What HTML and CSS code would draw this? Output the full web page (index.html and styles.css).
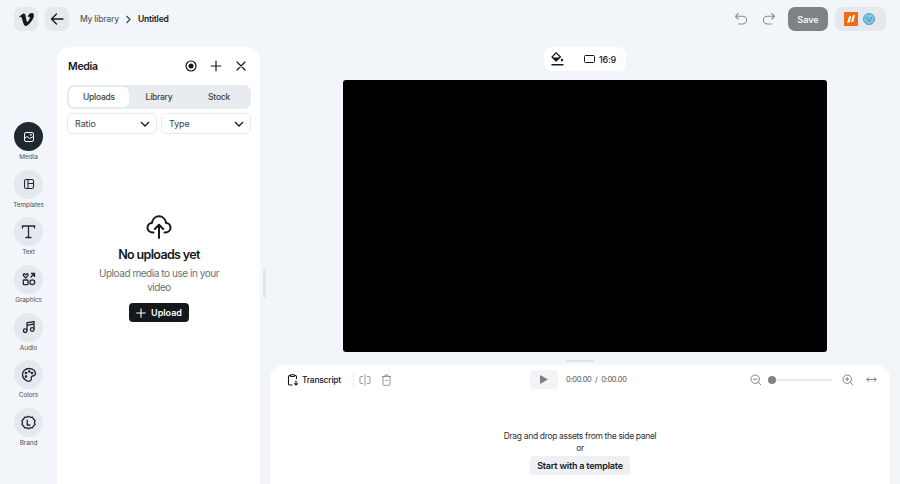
FILE: index.html
```html
<!DOCTYPE html>
<html lang="en">
<head>
<meta charset="utf-8">
<title>Untitled</title>
<link rel="stylesheet" href="styles.css">
</head>
<body>
<div class="app">
  <header class="topbar">
    <div class="top-left">
      <button class="square-btn"><svg width="15" height="13" viewBox="0 0 24 21"><path d="M23.900 4.900c-.1 2.300-1.700 5.500-4.900 9.600C15.700 18.800 12.900 21 10.600 21c-1.400 0-2.600-1.300-3.600-3.900L5 9.900C4.300 7.300 3.500 6 2.600 6c-.2 0-.8.400-1.900 1.100L0 6.200c1.200-1 2.400-2.100 3.500-3.100C5.100 1.700 6.300 1 7.100.9 9 .7 10.200 2 10.600 4.800c.5 3 .8 4.900 1 5.600.5 2.500 1.100 3.700 1.800 3.700.5 0 1.300-.8 2.300-2.400 1-1.600 1.600-2.800 1.700-3.700.1-1.400-.4-2.100-1.700-2.100-.6 0-1.200.1-1.800.4C15.100 2.200 17.400.2 20.800 0c2.200-.1 3.300 1.600 3.100 4.900z" fill="#14181d"/></svg></button>
      <button class="square-btn"><svg width="14" height="14" viewBox="0 0 14 14" fill="none" stroke="#14181d" stroke-width="1.300" stroke-linecap="round" stroke-linejoin="round"><path d="M13 7H1.500M6.500 2 1.500 7l5 5"/></svg></button>
      <nav class="crumbs">
        <span class="crumb-link">My library</span>
        <svg width="7" height="9" viewBox="0 0 7 9" fill="none" stroke="#3c434b" stroke-width="1.100"><path d="m1.500 1 3.500 3.500L1.500 8"/></svg>
        <span class="crumb-current">Untitled</span>
      </nav>
    </div>
    <div class="top-right">
      <svg class="history" width="14" height="14" viewBox="0 0 14 14" fill="none" stroke="#868c92" stroke-width="1.100" stroke-linecap="round" stroke-linejoin="round"><path d="M4.200 1.500 1.500 4.300l2.700 2.700M1.700 4.300h7a3.800 3.800 0 0 1 0 7.700H4.500"/></svg>
      <svg class="history" width="14" height="14" viewBox="0 0 14 14" fill="none" stroke="#868c92" stroke-width="1.100" stroke-linecap="round" stroke-linejoin="round"><path d="M9.800 1.500l2.700 2.800L9.800 7M12.300 4.300h-7a3.800 3.800 0 0 0 0 7.700h4.200"/></svg>
      <button class="save-btn">Save</button>
      <div class="avatars">
        <span class="badge-orange"><svg width="10" height="10" viewBox="0 0 10 10" fill="#fff"><path d="M1.200 9 3 2.500 5.200 1.800 3.800 8.300zM5 8.300 6.700 1.500 9 1 7.300 7.700z"/></svg></span>
        <span class="badge-blue"><svg width="8" height="8" viewBox="0 0 8 8" fill="none" stroke="#2f6f8f" stroke-width=".8"><path d="M1 3.200h2M5 3.200h2M2.200 6c1-1 2.600-1 3.600 0"/></svg></span>
      </div>
    </div>
  </header>

  <div class="workspace">
    <aside class="rail">
      <div class="rail-item">
        <span class="rail-circle active"><svg width="12" height="12" viewBox="0 0 12 12" fill="none" stroke="#fff" stroke-width="1"><rect x="1.500" y="1.500" width="9" height="9" rx="1.500"/><path d="M1.500 7.500 4 5.500l2.500 2 4-2"/><circle cx="7.800" cy="3.800" r=".6"/></svg></span>
        <span class="rail-label">Media</span>
      </div>
      <div class="rail-item">
        <span class="rail-circle"><svg width="12" height="12" viewBox="0 0 12 12" fill="none" stroke="#22282e" stroke-width="1.100"><rect x="1.500" y="1.500" width="9" height="9" rx="1.800"/><path d="M5 1.500v9M5 5.500h5.500"/></svg></span>
        <span class="rail-label">Templates</span>
      </div>
      <div class="rail-item">
        <span class="rail-circle"><svg width="17" height="17" viewBox="0 0 17 17" fill="none" stroke="#22282e" stroke-width="1.300" stroke-linecap="round"><path d="M2.500 5V3h12v2M8.500 3v11M6 14.500h5"/></svg></span>
        <span class="rail-label">Text</span>
      </div>
      <div class="rail-item">
        <span class="rail-circle"><svg width="14" height="14" viewBox="0 0 14 14" fill="none" stroke="#22282e" stroke-width="1.300"><path d="M3.700 6 1.500 3.700c-.7-1 .2-2.200 1.200-1.900.5.100.8.400 1 .8.200-.4.500-.7 1-.8 1-.3 1.900.9 1.200 1.900z"/><path d="M8.500 5.500 12.500 1.500M9 1.500h3.500V5"/><rect x="1.300" y="8" width="4.700" height="4.700" rx=".6"/><circle cx="10.300" cy="10.300" r="2.400"/></svg></span>
        <span class="rail-label">Graphics</span>
      </div>
      <div class="rail-item">
        <span class="rail-circle"><svg width="14" height="14" viewBox="0 0 14 14" fill="none" stroke="#22282e" stroke-width="1.300"><path d="M5 10.500V2.800l7-1.300v7.700M5 5.300l7-1.300"/><circle cx="3.200" cy="10.700" r="1.800"/><circle cx="10.200" cy="9.500" r="1.800"/></svg></span>
        <span class="rail-label">Audio</span>
      </div>
      <div class="rail-item">
        <span class="rail-circle"><svg width="16" height="16" viewBox="0 0 16 16" fill="none" stroke="#22282e" stroke-width="1.300"><path d="M8 1.500c3.800 0 6.500 2.300 6.500 5 0 2.500-2.700 2.300-3.700 2.800-1.400.7.300 2.600-1 4-1.200 1.300-3.500 1.200-5.300-.2C2.500 11.600 1.500 9.800 1.500 7.700 1.500 4.200 4.300 1.500 8 1.500z"/><circle cx="5" cy="6" r=".7" fill="#22282e"/><circle cx="8.300" cy="4.500" r=".7" fill="#22282e"/><circle cx="11" cy="6" r=".7" fill="#22282e"/><circle cx="5" cy="9.500" r=".7" fill="#22282e"/></svg></span>
        <span class="rail-label">Colors</span>
      </div>
      <div class="rail-item">
        <span class="rail-circle"><svg width="15" height="15" viewBox="0 0 15 15" fill="none" stroke="#22282e" stroke-width="1.300"><path d="M7.500 1.200 9.300 2.300 11.400 2.200 12.500 4 14 5.500 13.500 7.500 14 9.500 12.500 11 11.400 12.800 9.300 12.700 7.500 13.800 5.700 12.700 3.600 12.800 2.500 11 1 9.500 1.500 7.500 1 5.500 2.500 4 3.600 2.200 5.700 2.300z"/><path d="M6.300 4.800v5.200h3"/></svg></span>
        <span class="rail-label">Brand</span>
      </div>
    </aside>

    <section class="panel">
      <div class="panel-head">
        <h2 class="panel-title">Media</h2>
        <div class="panel-actions">
          <svg width="12" height="12" viewBox="0 0 12 12"><circle cx="6" cy="6" r="5" fill="none" stroke="#14181d" stroke-width="1.200"/><circle cx="6" cy="6" r="2.500" fill="#14181d"/></svg>
          <svg width="12" height="12" viewBox="0 0 12 12" fill="none" stroke="#14181d" stroke-width="1.200" stroke-linecap="round"><path d="M6 1.200v9.600M1.200 6h9.600"/></svg>
          <svg width="12" height="12" viewBox="0 0 12 12" fill="none" stroke="#14181d" stroke-width="1.200" stroke-linecap="round"><path d="m2 2 8 8M10 2l-8 8"/></svg>
        </div>
      </div>
      <div class="tabs">
        <span class="tab selected">Uploads</span>
        <span class="tab">Library</span>
        <span class="tab">Stock</span>
      </div>
      <div class="filters">
        <div class="select"><span>Ratio</span><svg width="10" height="6" viewBox="0 0 10 6" fill="none" stroke="#14181d" stroke-width="1.300"><path d="m1 1 4 4 4-4"/></svg></div>
        <div class="select"><span>Type</span><svg width="10" height="6" viewBox="0 0 10 6" fill="none" stroke="#14181d" stroke-width="1.300"><path d="m1 1 4 4 4-4"/></svg></div>
      </div>
      <div class="empty">
        <svg width="26" height="24" viewBox="0 0 26 24" fill="none" stroke="#14181d" stroke-width="2" stroke-linecap="round" stroke-linejoin="round"><path d="M7.500 17.500H6.800C3.700 17.500 1.500 15.400 1.500 12.700c0-2.500 1.900-4.500 4.400-4.700C6.500 4 9.500 1.200 13 1.200S19.500 4 20.100 8c2.500.2 4.400 2.200 4.400 4.700 0 2.700-2.200 4.800-5.300 4.800h-.7"/><path d="M13 23V10M8.800 14 13 9.800l4.200 4.200"/></svg>
        <h3 class="empty-title">No uploads yet</h3>
        <p class="empty-text">Upload media to use in your video</p>
        <button class="upload-btn"><svg width="10" height="10" viewBox="0 0 10 10" fill="none" stroke="#fff" stroke-width="1.100" stroke-linecap="round"><path d="M5 .7v8.600M.7 5h8.600"/></svg>Upload</button>
      </div>
    </section>

    <div class="splitter"><span class="splitter-bar"></span></div>

    <main class="stage-col">
      <div class="stage">
        <div class="stage-tools">
          <span class="tool-fill"><svg width="13" height="14" viewBox="0 0 13 14"><path d="M5 .8 1 5l4 4 4.500-4z" fill="none" stroke="#14181d" stroke-width="1.200"/><path d="M1.500 5.500h7.800L5 9.500z" fill="#14181d"/><circle cx="11" cy="8" r="1.200" fill="#14181d"/><rect x="0.500" y="12" width="12" height="1.500" fill="#14181d"/></svg></span>
          <span class="tool-ratio"><svg width="11" height="8" viewBox="0 0 11 8" fill="none" stroke="#14181d" stroke-width="1"><rect x=".5" y=".5" width="10" height="7" rx="1"/></svg>16:9</span>
        </div>
        <div class="video"></div>
        <span class="stage-handle"></span>
      </div>
      <section class="timeline">
        <div class="timeline-bar">
          <div class="tl-left">
            <span class="transcript"><svg width="12" height="12" viewBox="0 0 12 12" fill="none" stroke="#14181d" stroke-width="1.100"><path d="M5.500 11H2.800c-.8 0-1.300-.5-1.300-1.300V2.800c0-.8.500-1.300 1.300-1.300h.7M7.500 1.500h.7c.8 0 1.300.5 1.300 1.300V5"/><rect x="3.500" y=".7" width="4" height="1.800" rx=".5"/><path d="M9 6.500v4.500M7.300 9.300 9 11l1.700-1.700"/></svg>Transcript</span>
            <span class="divider"></span>
            <svg width="12" height="12" viewBox="0 0 12 12" fill="none" stroke="#90969c" stroke-width="1"><path d="M6 .5v11M4 2.500H2C1.200 2.500 1 3 1 3.500v5c0 .5.200 1 1 1h2M8 2.500h2c.8 0 1 .5 1 1v5c0 .5-.2 1-1 1H8"/></svg>
            <svg width="11" height="12" viewBox="0 0 11 12" fill="none" stroke="#90969c" stroke-width="1"><path d="M1 2.500h9M4 2.500V1h3v1.500M2 2.500v8c0 .4.300.8.800.8h5.400c.5 0 .8-.4.800-.8v-8M4.300 6.500h2.400"/></svg>
          </div>
          <div class="tl-center">
            <span class="play-btn"><svg width="8" height="9" viewBox="0 0 8 9"><path d="M0 0l8 4.500L0 9z" fill="#7d8185"/></svg></span>
            <span class="time">0:00.00&nbsp;&nbsp;/&nbsp;&nbsp;0:00.00</span>
          </div>
          <div class="tl-right">
            <svg width="12" height="12" viewBox="0 0 12 12" fill="none" stroke="#7d8288" stroke-width="1"><circle cx="5.200" cy="5.200" r="4.200"/><path d="M3.200 5.200h4M8.300 8.300 11 11"/></svg>
            <div class="zoom-track"><span class="zoom-thumb"></span></div>
            <svg width="12" height="12" viewBox="0 0 12 12" fill="none" stroke="#7d8288" stroke-width="1"><circle cx="5.200" cy="5.200" r="4.200"/><path d="M3.200 5.200h4M5.200 3.200v4M8.300 8.300 11 11"/></svg>
            <svg class="fit" width="11" height="7" viewBox="0 0 11 7" fill="none" stroke="#7d8288" stroke-width="1"><path d="M.8 3.500h9.400M3 1.200.8 3.500 3 5.800M8 1.200l2.200 2.300L8 5.800"/></svg>
          </div>
        </div>
        <div class="tl-empty">
          <p class="drop-text">Drag and drop assets from the side panel</p>
          <p class="drop-text">or</p>
          <button class="template-btn">Start with a template</button>
        </div>
      </section>
    </main>
  </div>
</div>
</body>
</html>
```

FILE: styles.css
```css
* { box-sizing: border-box; }
html, body { margin: 0; padding: 0; height: 100%; overflow: hidden; }
body { background: #f2f5f9; font-family: Inter, "Liberation Sans", sans-serif; color: #14181d; }
button { font-family: inherit; border: 0; padding: 0; cursor: pointer; }
h2, h3, p { margin: 0; font-weight: inherit; }

.app { width: 900px; height: 484px; display: flex; flex-direction: column; overflow: hidden; }

.topbar { height: 47px; flex: none; display: flex; justify-content: space-between; align-items: flex-start; padding: 7px 14px; }
.top-left { display: flex; align-items: center; gap: 7px; height: 24px; }
.square-btn { width: 24px; height: 24px; border-radius: 7px; background: #e5e8ec; display: flex; align-items: center; justify-content: center; }
.crumbs { display: flex; align-items: center; gap: 6px; margin-left: 4px; font-size: 8.500px; font-weight: 500; letter-spacing: -.2px; }
.crumb-link { color: #5b6168; }
.crumb-current { color: #14181d; font-weight: 600; }

.top-right { display: flex; align-items: center; height: 24px; }
.history { margin-right: 14px; }
.history + .history { margin-right: 12px; }
.save-btn { width: 40px; height: 24px; border-radius: 7px; background: #7f8387; color: #f4f5f6; font-size: 9px; font-weight: 600; }
.avatars { width: 51px; height: 24px; margin-left: 7px; border-radius: 7px; background: #e5e8ec; display: flex; align-items: center; gap: 5px; padding-left: 9px; }
.badge-orange { width: 14px; height: 14px; background: #f26a12; display: flex; align-items: center; justify-content: center; }
.badge-blue { width: 12px; height: 12px; border-radius: 50%; background: #7fc4e4; border: 1px solid #4a9cc4; display: flex; align-items: center; justify-content: center; }

.workspace { flex: 1; display: flex; min-height: 0; }

.rail { width: 57px; flex: none; display: flex; flex-direction: column; padding: 75px 0 0 14px; }
.rail-item { width: 29px; height: 47.670px; display: flex; flex-direction: column; align-items: center; }
.rail-circle { width: 29px; height: 29px; flex: none; border-radius: 50%; background: #e5e8ec; display: flex; align-items: center; justify-content: center; }
.rail-circle.active { background: #202830; }
.rail-label { font-size: 6.500px; line-height: 9px; margin-top: 2px; color: #4c5259; white-space: nowrap; letter-spacing: -.1px; }

.panel { width: 203px; flex: none; background: #fff; border-radius: 14px 14px 0 0; padding: 0 9px 0 10px; display: flex; flex-direction: column; }
.panel-head { height: 38px; display: flex; align-items: center; justify-content: space-between; padding-left: 1px; padding-right: 4px; }
.panel-title { font-size: 10.500px; font-weight: 600; letter-spacing: -.3px; }
.panel-actions { display: flex; align-items: center; gap: 13px; }
.tabs { height: 24px; border-radius: 7px; background: #e8ebef; display: flex; padding: 2px; }
.tab { flex: 1; display: flex; align-items: center; justify-content: center; border-radius: 6px; font-size: 8.500px; letter-spacing: -.25px; font-weight: 500; color: #3a4047; }
.tab.selected { background: #fff; }
.filters { display: flex; gap: 4px; margin-top: 4px; }
.select { flex: 1; height: 21px; border: 1px solid #e6e9ed; border-radius: 5px; padding: 0 6px 0 7px; display: flex; align-items: center; justify-content: space-between; font-size: 9px; letter-spacing: -.1px; color: #3a4047; }
.select:first-child { flex: 0 0 90px; }
.empty { display: flex; flex-direction: column; align-items: center; margin-top: 81px; }
.empty-title { font-size: 12.500px; line-height: 16px; font-weight: 600; letter-spacing: -.65px; margin-top: 8px; }
.empty-text { width: 130px; margin-top: 3px; text-align: center; font-size: 10px; letter-spacing: -.45px; line-height: 14px; color: #6b7178; }
.upload-btn { width: 60px; height: 19px; margin-top: 9px; border-radius: 4px; background: #14181d; color: #fff; font-size: 9px; font-weight: 600; display: flex; align-items: center; justify-content: center; gap: 5px; }

.splitter { width: 10px; flex: none; display: flex; align-items: flex-start; padding: 221px 0 0 3px; }
.splitter-bar { width: 3px; height: 30px; border-radius: 2px; background: #e3e7ec; }

.stage-col { width: 620px; flex: none; display: flex; flex-direction: column; }
.stage { height: 318px; flex: none; display: flex; flex-direction: column; align-items: center; }
.stage-tools { height: 24px; width: 82px; flex: none; margin-left: 10px; background: #fff; border-radius: 8px; display: flex; align-items: center; }
.tool-fill { width: 26px; display: flex; justify-content: center; }
.tool-ratio { margin-left: 14px; display: flex; align-items: center; gap: 4px; font-size: 9px; letter-spacing: -.2px; font-weight: 500; }
.video { width: 484px; height: 272px; margin: 9px 0 0 10px; flex: none; background: #000; border-radius: 3px; }
.stage-handle { width: 28px; height: 2px; margin-top: 8px; border-radius: 1px; background: #dfe3e8; }

.timeline { flex: 1; background: #fff; border-radius: 14px 14px 0 0; display: flex; flex-direction: column; }
.timeline-bar { height: 29px; flex: none; position: relative; display: flex; align-items: center; justify-content: space-between; padding: 0 13px 0 17px; }
.tl-left { display: flex; align-items: center; gap: 10px; }
.transcript { display: flex; align-items: center; gap: 3px; font-size: 8.500px; letter-spacing: -.25px; font-weight: 500; }
.divider { width: 1px; height: 15px; background: #e6e9ed; margin-left: 2px; margin-right: -5px; }
.tl-center { position: absolute; left: 260px; top: 5px; display: flex; align-items: center; gap: 8px; }
.play-btn { width: 28px; height: 19px; border-radius: 4px; background: #f3f4f6; display: flex; align-items: center; justify-content: center; }
.time { font-size: 7.500px; letter-spacing: -.3px; color: #4c5259; }
.tl-right { display: flex; align-items: center; gap: 6px; }
.zoom-track { width: 64px; height: 2px; background: #e3e5e8; position: relative; margin-right: 4px; }
.zoom-thumb { position: absolute; left: 0; top: -3px; width: 8px; height: 8px; border-radius: 50%; background: #808488; }
.fit { margin-left: 6px; }
.tl-empty { display: flex; flex-direction: column; align-items: center; margin-top: 36px; }
.drop-text { font-size: 8.500px; line-height: 12px; color: #2b3138; letter-spacing: -.33px; }
.template-btn { width: 100px; height: 19px; margin-top: 2px; border-radius: 4px; background: #eef0f3; color: #14181d; font-size: 9px; letter-spacing: -.2px; font-weight: 600; }
```
